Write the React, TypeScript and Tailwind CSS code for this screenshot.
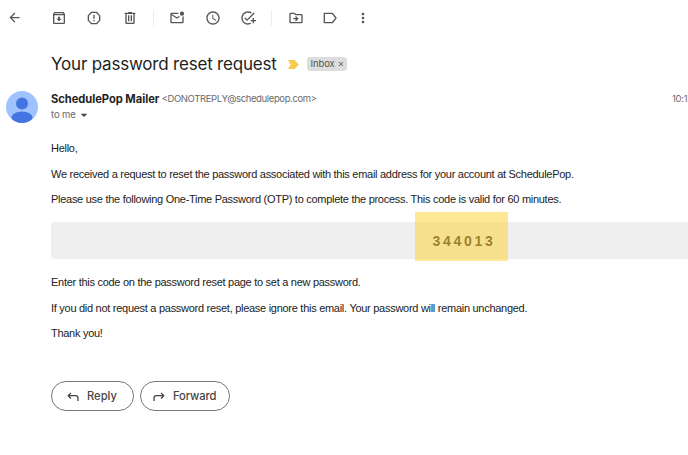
import type { ReactNode } from "react";
import {
  MdAccessTime,
  MdArrowBack,
  MdArrowDropDown,
  MdClose,
  MdMoreVert,
  MdOutlineAddTask,
  MdOutlineArchive,
  MdOutlineDriveFileMove,
} from "react-icons/md";

const ReportIcon = () => (
  <svg viewBox="0 0 24 24" className="h-4 w-4" fill="none" stroke="currentColor" strokeWidth="2">
    <path d="M8.4 3.5h7.2l4.9 4.9v7.2l-4.9 4.9H8.4l-4.9-4.9V8.4z" strokeLinejoin="round" />
    <path d="M12 7v6M12 15v2" />
  </svg>
);

const TrashIcon = () => (
  <svg viewBox="0 0 24 24" className="h-4 w-4" fill="currentColor">
    <path d="M15 4V3H9v1H4v2h1v13c0 1.1.9 2 2 2h10c1.1 0 2-.9 2-2V6h1V4h-5zm2 15H7V6h10v13zM9 8h2v9H9zm4 0h2v9h-2z" />
  </svg>
);

const UnreadIcon = () => (
  <svg viewBox="0 0 24 24" className="h-4 w-4" fill="currentColor">
    <path d="M20 10v8H4V8l8 5 4.6-2.9a5 5 0 0 1-1.6-1.2L12 11 4 6h10.1a5 5 0 0 1 0-2H4c-1.1 0-2 .9-2 2v12c0 1.1.9 2 2 2h16c1.1 0 2-.9 2-2V9a5 5 0 0 1-2 1z" />
    <circle cx="19.5" cy="5.5" r="3.2" />
  </svg>
);

const LabelIcon = () => (
  <svg viewBox="0 0 24 24" className="h-4 w-4" fill="none" stroke="currentColor" strokeWidth="2">
    <path d="M3.500 5h12l5.500 7-5.500 7h-12z" strokeLinejoin="round" />
  </svg>
);

const ToolButton = ({ label, children }: { label: string; children: ReactNode }) => (
  <button aria-label={label} className="flex h-[35px] w-[35.5px] shrink-0 items-center justify-center">
    {children}
  </button>
);

const Divider = () => <div className="h-4 w-px shrink-0 bg-[#ececec]" />;

const Toolbar = () => (
  <div className="flex h-9 items-start text-[#555]">
    <div className="mr-[9px] -ml-[3.5px]">
      <ToolButton label="Back"><MdArrowBack className="h-[15px] w-[15px]" /></ToolButton>
    </div>
    <ToolButton label="Archive"><MdOutlineArchive className="h-4 w-4" /></ToolButton>
    <ToolButton label="Report spam"><ReportIcon /></ToolButton>
    <ToolButton label="Delete"><TrashIcon /></ToolButton>
    <div className="mt-2.5 mr-1.5 ml-[5px]"><Divider /></div>
    <ToolButton label="Mark as unread"><UnreadIcon /></ToolButton>
    <ToolButton label="Snooze"><MdAccessTime className="h-4 w-4" /></ToolButton>
    <ToolButton label="Add to tasks"><MdOutlineAddTask className="h-4 w-4" /></ToolButton>
    <div className="mt-2.5 mr-1.5 ml-[5px]"><Divider /></div>
    <ToolButton label="Move to"><MdOutlineDriveFileMove className="h-4 w-4" /></ToolButton>
    <div className="-ml-px">
      <ToolButton label="Labels"><LabelIcon /></ToolButton>
    </div>
    <div className="-ml-[3px]">
      <ToolButton label="More"><MdMoreVert className="h-4 w-4" /></ToolButton>
    </div>
  </div>
);

const Avatar = () => (
  <svg viewBox="0 0 32 32" className="h-8 w-8 shrink-0">
    <clipPath id="avatar">
      <circle cx="16" cy="16" r="16" />
    </clipPath>
    <g clipPath="url(#avatar)">
      <rect width="32" height="32" fill="#a0c3ff" />
      <circle cx="16" cy="12.5" r="6" fill="#4374e0" />
      <ellipse cx="16" cy="26.5" rx="10.5" ry="6" fill="#4374e0" />
    </g>
  </svg>
);

const ReplyArrow = ({ flip = false }: { flip?: boolean }) => (
  <svg
    viewBox="0 0 12 12"
    className={flip ? "mt-0.5 h-3 w-3 -scale-x-100" : "mt-0.5 h-3 w-3"}
    fill="none"
    stroke="currentColor"
    strokeWidth="1.3"
  >
    <path d="M4 1.9 1.2 4.7 4 7.5M1.2 4.7h7.3a2.5 2.5 0 0 1 2.5 2.5V10" />
  </svg>
);

export default function App() {
  return (
    <div className="h-[455px] w-full overflow-hidden bg-white font-['Inter',sans-serif] text-[#1f1f1f]">
      <Toolbar />

      {/* Subject */}
      <div className="mt-[17px] flex h-[22px] items-center pl-[51px]">
        <h1 className="w-[225px] text-[17px] leading-[22px] font-normal tracking-[-0.2px] whitespace-nowrap">
          Your password reset request
        </h1>
        <svg viewBox="0 0 11 9" className="ml-3 h-[9px] w-[11px]">
          <path d="M0 0h6.5L11 4.5 6.5 9H0l2.6-4.5z" fill="#f7cb4d" />
        </svg>
        <span className="ml-2 flex h-3.5 w-10 items-center justify-between rounded-[3px] bg-[#dddddd] pr-[2px] pl-[3.5px] text-[9.5px] tracking-[-0.1px] text-[#555]">
          Inbox <MdClose className="h-2 w-2" />
        </span>
      </div>

      {/* Sender */}
      <div className="mt-4 flex h-8 pl-1.5">
        <Avatar />
        <div className="ml-[13px] flex-1">
          <div className="flex h-4 items-center whitespace-nowrap">
            <span className="w-[108px] text-[11.2px] font-bold tracking-[-0.05px]">SchedulePop Mailer</span>
            <span className="ml-[2.5px] text-[9.5px] tracking-[-0.37px] text-[#6a6a6a]">&lt;DONOTREPLY@schedulepop.com&gt;</span>
          </div>
          <div className="flex h-4 items-center text-[9.5px] tracking-[-0.1px] text-[#6a6a6a]">
            to me <MdArrowDropDown className="h-4 w-4 text-[#444]" />
          </div>
        </div>
        <span className="w-4 pt-px text-[9.5px] tracking-[-0.3px] whitespace-nowrap text-[#6a6a6a]">10:1</span>
      </div>

      {/* Message */}
      <div className="mt-[17px] w-[872px] pl-[51px] font-['Liberation_Sans',Arial,sans-serif] text-[11px] leading-4 tracking-[-0.28px] text-[#222]">
        <p>Hello,</p>
        <p className="mt-[9.5px]">
          We received a request to reset the password associated with this email address for your account at SchedulePop.
        </p>
        <p className="mt-[9.5px]">
          Please use the following One-Time Password (OTP) to complete the process. This code is valid for 60 minutes.
        </p>
        <div className="relative mt-[15px] flex h-[37px] items-center justify-center rounded-[4px] bg-[#efefef]">
          <span className="pl-[5px] text-[14px] font-bold tracking-[2.7px] text-[#333]">344013</span>
          <div className="absolute top-[-10px] left-[364px] h-[49px] w-[93px] bg-[#ffd12b]/50" />
        </div>
        <p className="mt-[15px]">Enter this code on the password reset page to set a new password.</p>
        <p className="mt-[9.5px]">
          If you did not request a password reset, please ignore this email. Your password will remain unchanged.
        </p>
        <p className="mt-[9.5px]">Thank you!</p>
      </div>

      {/* Actions */}
      <div className="mt-10 flex gap-1.5 pl-[50.5px] text-[11.2px] font-medium text-[#444]">
        <button className="flex h-[30px] w-[83.5px] items-center rounded-full border border-[#747775] pl-[15.5px]">
          <ReplyArrow />
          <span className="ml-2">Reply</span>
        </button>
        <button className="flex h-[30px] w-[90px] items-center rounded-full border border-[#747775] pl-3">
          <ReplyArrow flip />
          <span className="ml-2 tracking-[-0.1px]">Forward</span>
        </button>
      </div>
    </div>
  );
}
